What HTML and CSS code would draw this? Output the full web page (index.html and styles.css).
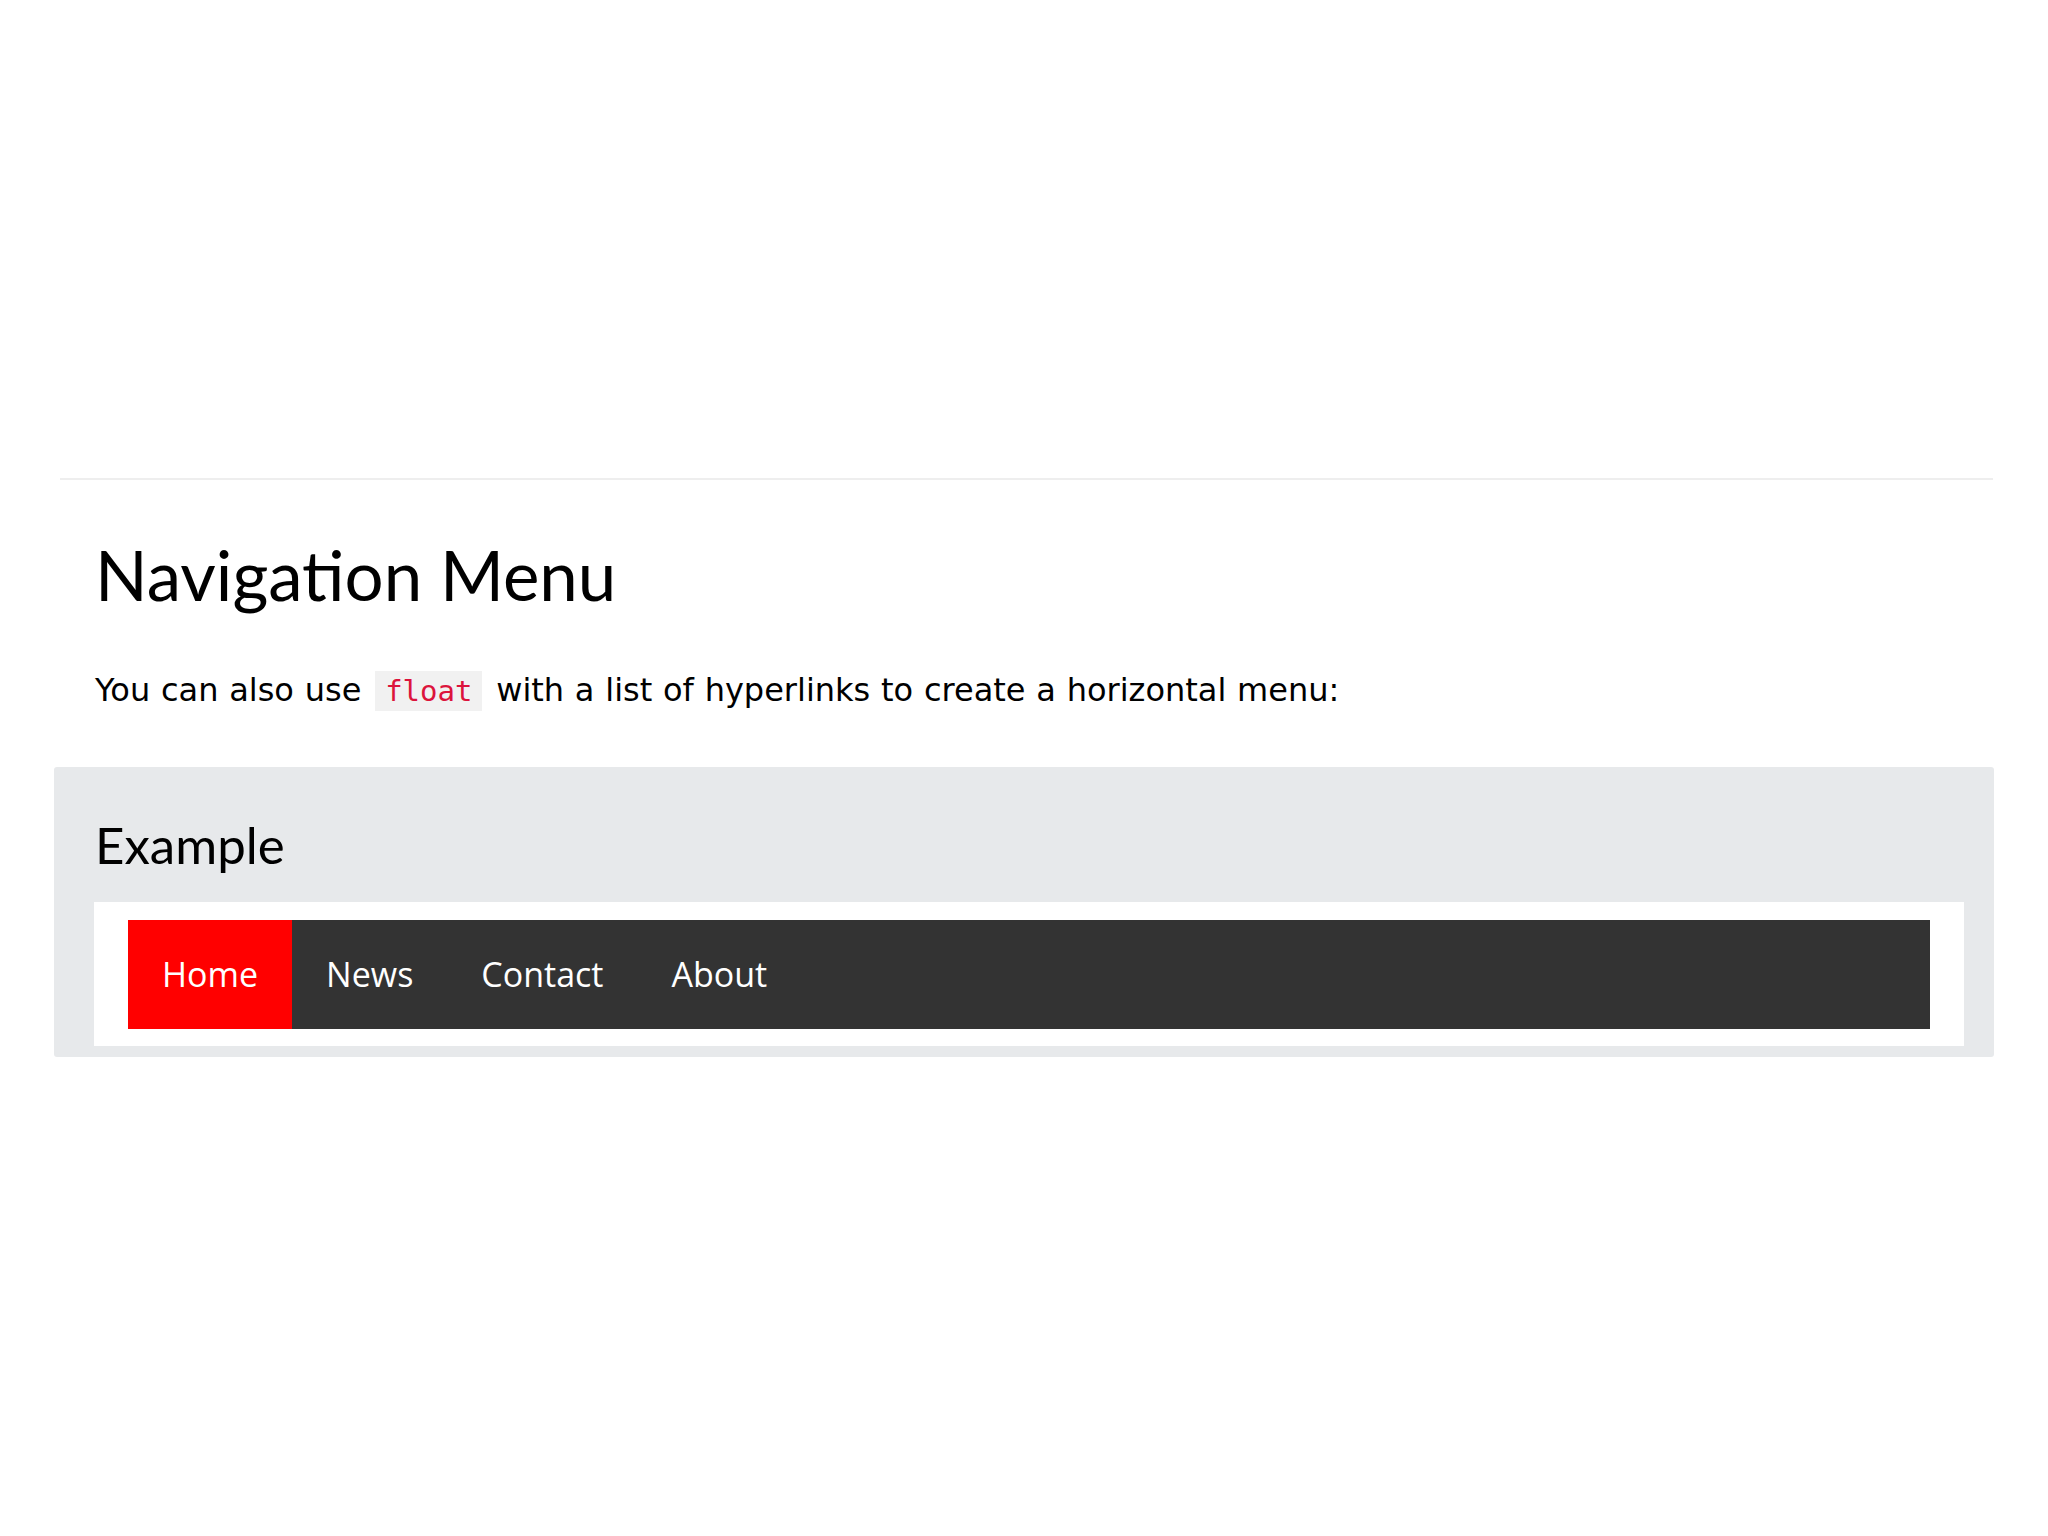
FILE: index.html
```html
<!DOCTYPE html>
<html lang="en">
<head>
<meta charset="utf-8">
<title>Navigation Menu</title>
<link rel="stylesheet" href="styles.css">
</head>
<body>
<main class="page">
  <hr class="rule">
  <h2 class="title">Navigation Menu</h2>
  <p class="intro">You can also use <code class="code">float</code> with a list of hyperlinks to create a horizontal menu:</p>
  <section class="example">
    <h3 class="example-title">Example</h3>
    <div class="demo">
      <ul class="nav">
        <li><a class="nav-link active" href="#home">Home</a></li>
        <li><a class="nav-link" href="#news">News</a></li>
        <li><a class="nav-link" href="#contact">Contact</a></li>
        <li><a class="nav-link" href="#about">About</a></li>
      </ul>
    </div>
  </section>
</main>
</body>
</html>
```
FILE: styles.css
```css
html, body {
  margin: 0;
  padding: 0;
  background: #ffffff;
}

body {
  font-family: "Open Sans", "Noto Sans", sans-serif;
  color: #000000;
}

.page {
  padding: 478px 54px 0 54px;
}

.rule {
  margin: 0 1px 0 6px;
  border: 0;
  border-top: 2px solid #eeeeee;
  height: 0;
}

.title {
  margin: 52px 0 0 41px;
  font-family: "Lato", "Open Sans", sans-serif;
  font-size: 69px;
  line-height: 86px;
  font-weight: 400;
}

.intro {
  margin: 50px 0 0 41px;
  font-family: "DejaVu Sans", "Verdana", sans-serif;
  font-size: 32px;
  line-height: 44px;
  word-spacing: 0.6px;
  color: #000;
}

.code {
  font-family: "DejaVu Sans Mono", "Liberation Mono", monospace;
  font-size: 29px;
  color: #dc143c;
  background: #f1f1f1;
  padding: 3px 10px;
  margin: 0 3px;
  word-spacing: 0;
}

.example {
  margin-top: 54px;
  background: #e7e9eb;
  padding: 47px 30px 11px 40px;
  border-radius: 3px;
}

.example-title {
  margin: 0 0 26px 1px;
  font-family: "Lato", "Open Sans", sans-serif;
  font-size: 51px;
  line-height: 62px;
  font-weight: 400;
}

.demo {
  background: #ffffff;
  padding: 18px 34px 17px 34px;
}

.nav {
  list-style: none;
  margin: 0;
  padding: 0;
  display: flex;
  background: #333333;
}

.nav-link {
  display: block;
  padding: 30px 34px;
  font-size: 34px;
  line-height: 49px;
  color: #ffffff;
  text-decoration: none;
}

.nav-link.active {
  background: #ff0000;
}
```
